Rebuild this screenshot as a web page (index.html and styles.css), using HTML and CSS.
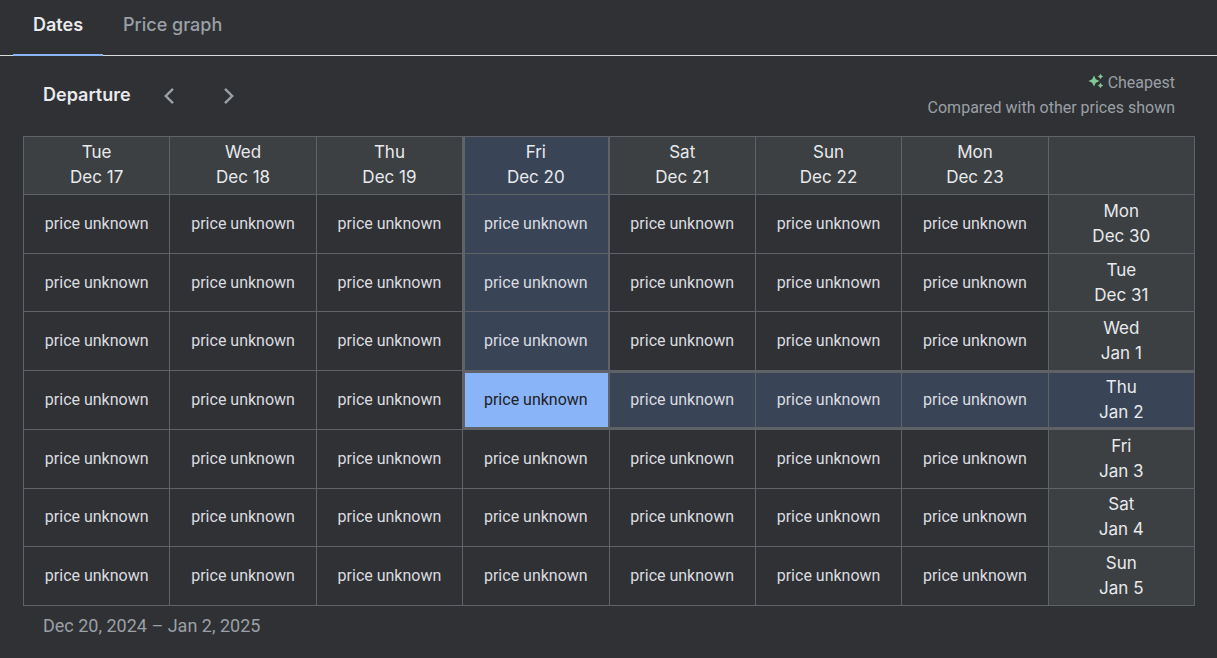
FILE: index.html
```html
<!DOCTYPE html>
<html lang="en">
<head>
<meta charset="utf-8">
<meta name="viewport" content="width=device-width, initial-scale=1">
<title>Dates</title>
<link rel="stylesheet" href="styles.css">
</head>
<body>
<div class="tabs" role="tablist">
  <button class="tab tab-active" type="button" role="tab" aria-selected="true">Dates</button>
  <button class="tab" type="button" role="tab" aria-selected="false">Price graph</button>
</div>
<main class="panel">
  <header class="toolbar">
    <h2 class="title">Departure</h2>
    <button class="arrow" type="button" aria-label="Earlier departure"><svg viewBox="0 0 24 24" width="24" height="24"><path d="M16 4.800 8.800 12 16 19.200" /></svg></button>
    <button class="arrow arrow-next" type="button" aria-label="Later departure"><svg viewBox="0 0 24 24" width="24" height="24"><path d="M8 4.800 15.200 12 8 19.200" /></svg></button>
    <div class="legend">
      <div class="cheapest"><svg class="spark" viewBox="0 0 16 16" width="16" height="16"><path d="M6 2.500 7.800 6.200 11.500 8 7.800 9.800 6 13.500 4.200 9.800.5 8 4.200 6.200ZM12.500 .8l1 1.700 1.700 1-1.700 1-1 1.700-1-1.700-1.700-1 1.700-1ZM12.500 9.800l1 1.700 1.700 1-1.700 1-1 1.700-1-1.700-1.700-1 1.700-1Z" /></svg>Cheapest</div>
      <div>Compared with other prices shown</div>
    </div>
  </header>
  <table class="grid">
    <thead>
      <tr><th>Tue<br>Dec 17</th><th>Wed<br>Dec 18</th><th>Thu<br>Dec 19</th><th class="col">Fri<br>Dec 20</th><th>Sat<br>Dec 21</th><th>Sun<br>Dec 22</th><th>Mon<br>Dec 23</th><td class="corner"></td></tr>
    </thead>
    <tbody>
      <tr><td>price unknown</td><td>price unknown</td><td>price unknown</td><td class="col">price unknown</td><td>price unknown</td><td>price unknown</td><td>price unknown</td><th>Mon<br>Dec 30</th></tr>
      <tr><td>price unknown</td><td>price unknown</td><td>price unknown</td><td class="col">price unknown</td><td>price unknown</td><td>price unknown</td><td>price unknown</td><th>Tue<br>Dec 31</th></tr>
      <tr><td>price unknown</td><td>price unknown</td><td>price unknown</td><td class="col">price unknown</td><td>price unknown</td><td>price unknown</td><td>price unknown</td><th>Wed<br>Jan 1</th></tr>
      <tr><td>price unknown</td><td>price unknown</td><td>price unknown</td><td class="chosen">price unknown</td><td class="row">price unknown</td><td class="row">price unknown</td><td class="row">price unknown</td><th class="row">Thu<br>Jan 2</th></tr>
      <tr><td>price unknown</td><td>price unknown</td><td>price unknown</td><td>price unknown</td><td>price unknown</td><td>price unknown</td><td>price unknown</td><th>Fri<br>Jan 3</th></tr>
      <tr><td>price unknown</td><td>price unknown</td><td>price unknown</td><td>price unknown</td><td>price unknown</td><td>price unknown</td><td>price unknown</td><th>Sat<br>Jan 4</th></tr>
      <tr><td>price unknown</td><td>price unknown</td><td>price unknown</td><td>price unknown</td><td>price unknown</td><td>price unknown</td><td>price unknown</td><th>Sun<br>Jan 5</th></tr>
    </tbody>
  </table>
  <p class="summary">Dec 20, 2024 – Jan 2, 2025</p>
</main>
</body>
</html>
```

FILE: styles.css
```css
* {
  box-sizing: border-box;
}

body {
  margin: 0;
  background: #303134;
  color: #e8eaed;
  font-family: Roboto, sans-serif;
}

button {
  border: 0;
  background: none;
  padding: 0;
  cursor: pointer;
}

.tabs {
  display: flex;
  padding-left: 13px;
  border-bottom: 1px solid #dadce0;
}

.tab {
  padding: 13px 20px 17px;
  margin-bottom: -1px;
  border-bottom: 2px solid transparent;
  color: #9aa0a6;
  font: 500 18px/24px Inter, sans-serif;
}

.tab-active {
  border-color: #8ab4f8;
  color: #e8eaed;
  font-weight: 600;
}

.panel {
  padding: 14px 22px 0 23px;
}

.toolbar {
  display: flex;
  align-items: flex-start;
  padding: 0 20px;
  margin-bottom: 16px;
}

.title {
  margin: 13px 26px 0 0;
  font: 600 18px/24px Inter, sans-serif;
}

.arrow {
  display: flex;
  margin-top: 14px;
}

.arrow-next {
  margin-left: 36px;
}

.arrow svg {
  fill: none;
  stroke: #9aa0a6;
  stroke-width: 2.400;
}

.legend {
  margin-left: auto;
  color: #9aa0a6;
  font-size: 16px;
  line-height: 25px;
  text-align: right;
}

.cheapest {
  display: flex;
  justify-content: flex-end;
  gap: 4px;
}

.spark {
  margin-top: 3px;
  fill: #81c995;
}

.grid {
  width: 100%;
  height: 470px;
  border-collapse: collapse;
  table-layout: fixed;
}

.grid th,
.grid td {
  height: 58px;
  padding: 0;
  border: 1px solid #5f6368;
  text-align: center;
}

.grid td {
  color: #dadce0;
  font-size: 16px;
  line-height: 24px;
}

.grid th {
  background: #3c4043;
  font: 400 17px/25px Inter, sans-serif;
}

.grid thead th {
  padding-bottom: 2px;
}

.grid .corner {
  background: #3c4043;
}

.grid .col {
  background: #394457;
  box-shadow: inset 2px 0 #5f6368, inset -1px 0 #5f6368;
}

.grid .row {
  background: #394457;
  box-shadow: inset 0 2px #5f6368, inset 0 -2px #5f6368;
}

.grid .chosen {
  background: #8ab4f8;
  color: #202124;
  box-shadow: inset 2px 2px #5f6368, inset -1px -2px #5f6368;
}

.summary {
  margin: 8px 20px;
  color: #9aa0a6;
  font-size: 18px;
  line-height: 24px;
}
```
